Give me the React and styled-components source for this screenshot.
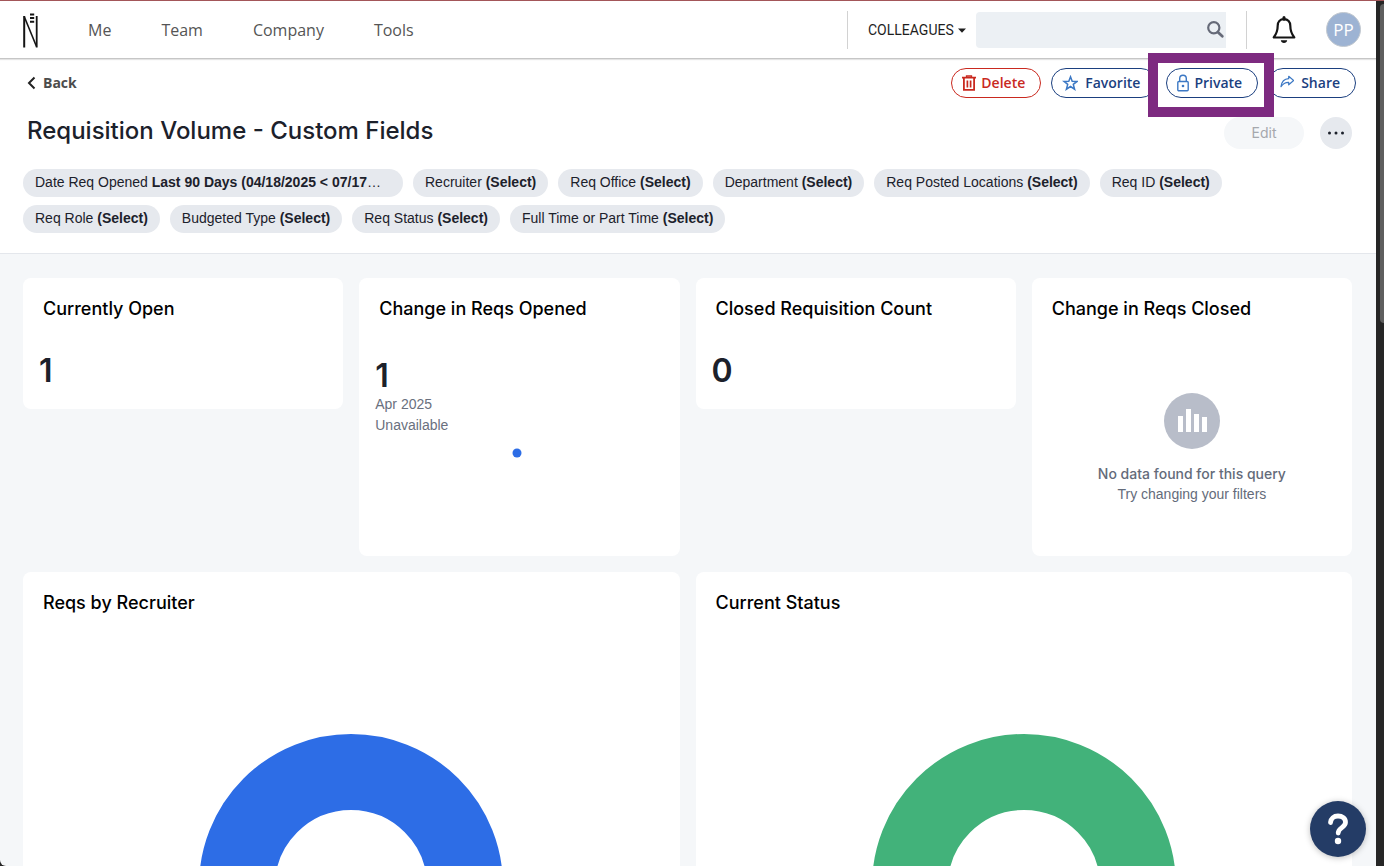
import React from "react";
import styled, { createGlobalStyle, css } from "styled-components";

const ui = `Inter, "Liberation Sans", sans-serif`;
const compact = `"Liberation Sans", Arial, sans-serif`;
const shell = `"Open Sans", "Noto Sans", sans-serif`;

const GlobalStyle = createGlobalStyle`
  *, *::before, *::after { box-sizing: border-box; }
  body { margin: 0; background: #262626; font-family: ${ui}; color: #1c212b; }
  button, input, select { font: inherit; color: inherit; }
  h1, h2, p { margin: 0; }
`;

const Window = styled.div`
  display: flex;
  height: 100vh;
  overflow: hidden;
  border-top: 1px solid #a35659;
`;

const Page = styled.div`
  flex: 1;
  min-width: 0;
  overflow: hidden;
  background: #f5f7f9;
  border-bottom-left-radius: 6px;
`;

const ScrollTrack = styled.div`
  width: 8px;
  padding: 3px 0 0 4px;
  background: #262626;
`;

const ScrollThumb = styled.div`
  height: 37%;
  background: #5f5f5f;
  border-radius: 4px 0 0 4px;
`;

const Header = styled.header`
  display: flex;
  align-items: center;
  height: 58px;
  padding: 0 15px 0 23px;
  background: #fff;
  border-bottom: 1px solid #c6c6c6;
  box-shadow: 0 1px 1px #e4e4e4;
  position: relative;
`;

const Nav = styled.nav`
  display: flex;
  gap: 50px;
  margin-left: 50px;
`;

const NavLink = styled.a`
  font: 400 16px/24px ${shell};
  color: #555;
  text-decoration: none;
`;

const HeaderTools = styled.div`
  display: flex;
  align-items: center;
  margin-left: auto;
`;

const Divider = styled.span`
  width: 1px;
  height: 38px;
  background: #d2d2d2;
`;

const ScopeField = styled.label`
  position: relative;
  display: flex;
  margin: 0 10px 0 20px;
  svg {
    position: absolute;
    right: 0;
    top: 10px;
    pointer-events: none;
  }
`;

const ScopeSelect = styled.select`
  appearance: none;
  width: 98px;
  height: 24px;
  padding: 0;
  border: 0;
  background: none;
  font: 400 14px/24px Roboto, sans-serif;
  color: #1e1e1e;
`;

const Search = styled.form`
  display: flex;
  width: 250px;
  height: 36px;
  margin-right: 20px;
  background: #ecf0f4;
  border-radius: 4px 0 0 4px;
`;

const SearchInput = styled.input`
  flex: 1;
  min-width: 0;
  padding: 0 12px;
  border: 0;
  background: none;
  font: 400 14px/20px ${shell};
`;

const IconButton = styled.button`
  display: flex;
  align-items: center;
  justify-content: center;
  padding: 0;
  border: 0;
  background: none;
`;

const Bell = styled(IconButton)`
  margin: 0 30px 0 25px;
`;

const Avatar = styled(IconButton)`
  width: 35px;
  height: 35px;
  border: 1px solid #c3c9d0;
  border-radius: 50%;
  background: #9db3d3;
  color: #fff;
  font: 400 17px/24px ${shell};
`;

const Top = styled.section`
  padding: 9px 20px 20px 23px;
  background: #fff;
  border-bottom: 1px solid #e4e7ec;
`;

const ActionRow = styled.div`
  display: flex;
  align-items: center;
  justify-content: space-between;
`;

const Back = styled.a`
  display: flex;
  align-items: center;
  gap: 7px;
  padding-left: 4px;
  font: 700 14px/20px ${shell};
  color: #4c4c4c;
  text-decoration: none;
`;

const Actions = styled.div`
  display: flex;
  gap: 10px;
`;

const Pill = styled.button`
  display: flex;
  align-items: center;
  gap: ${(p) => p.$gap || 5}px;
  height: 30px;
  padding: 0 15px 0 10px;
  border: 1px solid currentColor;
  border-radius: 15px;
  background: #fff;
  color: ${(p) => (p.$danger ? "#c9291f" : "#1b3f7f")};
  font: 600 14px/20px ${shell};
`;

const Marked = styled.div`
  position: relative;
  &::after {
    content: "";
    position: absolute;
    inset: -15px -16px -19px -18px;
    border: 10px solid #7d2a80;
    pointer-events: none;
    z-index: 2;
  }
`;

const TitleRow = styled.div`
  display: flex;
  align-items: center;
  gap: 16px;
  margin-top: 19px;
  padding: 0 4px;
`;

const Title = styled.h1`
  flex: 1;
  font-size: 24px;
  line-height: 28px;
  font-weight: 500;
  padding-bottom: 4px;
`;

const EditButton = styled.button`
  width: 80px;
  height: 32px;
  padding: 0 0 2px;
  border: 0;
  border-radius: 16px;
  background: #f5f7f9;
  color: #a5a8ad;
  font-size: 14px;
`;

const MoreButton = styled(IconButton)`
  width: 32px;
  height: 32px;
  border-radius: 50%;
  background: #e6e9ee;
`;

const Filters = styled.div`
  display: flex;
  flex-wrap: wrap;
  gap: 8px 10px;
  margin-top: 20px;
`;

const Chip = styled.button`
  height: 28px;
  padding: 0 12px 2px;
  border: 0;
  border-radius: 14px;
  background: #e6e9ee;
  font: 400 14px/20px ${compact};
  text-align: left;
  white-space: nowrap;
  b { font-weight: 700; }
  ${(p) => p.$wide && css`min-width: 380px;`}
`;

const Board = styled.main`
  display: grid;
  grid-template-columns: repeat(4, 1fr);
  align-items: start;
  gap: 16px;
  padding: 24px 24px 24px 23px;
`;

const Card = styled.article`
  grid-column: span ${(p) => p.$span || 1};
  min-height: ${(p) => p.$height || 131}px;
  padding: 19px 16px 16px;
  background: #fff;
  border-radius: 8px;
`;

const CardTitle = styled.h2`
  padding: 0 4px;
  font-size: 18px;
  line-height: 24px;
  font-weight: 500;
  color: #000;
`;

const Figure = styled.p`
  margin-top: ${(p) => p.$top || 32}px;
  font-size: 32px;
  line-height: 36px;
  font-weight: 600;
`;

const Note = styled.p`
  font: 400 14px/21px ${compact};
  color: #6a707e;
`;

const Trend = styled.svg`
  display: block;
  margin-top: 11px;
`;

const Empty = styled.div`
  display: flex;
  flex-direction: column;
  align-items: center;
  margin-top: 72px;
  font: 400 14px/20px ${compact};
  color: #646b7a;
  strong {
    margin-top: 15px;
    font-family: ${ui};
    font-weight: 500;
  }
`;

const Donut = styled.svg`
  display: block;
  margin: 119px auto 60px;
`;

const Help = styled.button`
  position: fixed;
  right: 18px;
  bottom: 9px;
  width: 56px;
  height: 56px;
  padding: 0;
  border: 0;
  border-radius: 50%;
  background: #243c66;
  box-shadow: 0 1px 6px rgba(0, 0, 0, 0.25);
  display: flex;
  align-items: center;
  justify-content: center;
`;

const navItems = ["Me", "Team", "Company", "Tools"];

const filters = [
  ["Date Req Opened", "Last 90 Days (04/18/2025 < 07/17", "…"],
  ["Recruiter", "(Select)"],
  ["Req Office", "(Select)"],
  ["Department", "(Select)"],
  ["Req Posted Locations", "(Select)"],
  ["Req ID", "(Select)"],
  ["Req Role", "(Select)"],
  ["Budgeted Type", "(Select)"],
  ["Req Status", "(Select)"],
  ["Full Time or Part Time", "(Select)"],
];

const Logo = () => (
  <svg width="15" height="38" viewBox="0 -2 15 38" role="img" aria-label="Home">
    <g fill="none" stroke="#141414">
      <path d="M1.2 3v31.500" strokeWidth="2" />
      <path d="M13.700 3v31.500" strokeWidth="1.800" />
      <path d="M1.200 3.500L13.500 33.500" strokeWidth="1.600" />
      <path d="M7 1.500h4.200M7 5h4.200M7 8.800h4.200" strokeWidth="1.900" />
    </g>
  </svg>
);

const TrashIcon = () => (
  <svg width="14" height="16" viewBox="0 0 14 16" fill="none" stroke="#c9291f">
    <path d="M0 2.700h14" strokeWidth="1.700" />
    <path d="M4.500 2.500V1h5v1.500" strokeWidth="1.300" />
    <path d="M1.900 3v11.800h10.200V3" strokeWidth="1.800" />
    <path d="M5.400 5.500v7M8.600 5.500v7" strokeWidth="1.700" />
  </svg>
);

const StarIcon = () => (
  <svg width="16" height="16" viewBox="0 0 16 16" fill="none" stroke="#3c78c4" strokeWidth="1.500">
    <path d="M8.500 1.800l1.700 4.400 4.900.2-3.800 3 1.300 4.800-4.100-2.700-4.100 2.700 1.300-4.800-3.800-3 4.900-.2z" />
  </svg>
);

const LockIcon = () => (
  <svg width="12" height="18" viewBox="0 0 12 18" fill="none" stroke="#3c78c4" strokeWidth="1.400">
    <rect x=".8" y="7.500" width="10.400" height="9.200" rx="1" />
    <path d="M2.700 7.500V4.500a3.300 3.300 0 0 1 6.600 0v3" />
    <circle cx="6" cy="12" r="1.300" fill="#3c78c4" stroke="none" />
  </svg>
);

const ShareIcon = () => (
  <svg width="15" height="16" viewBox="-1 0 15 16" fill="none" stroke="#3c78c4" strokeWidth="1.200" strokeLinejoin="round">
    <path d="M8.700 1.300l5 4.200-5 4.300V7.300C5.200 7.200 3 8.500 1 11.700 1.600 7 4.200 4 8.700 3.700z" />
  </svg>
);

const BellIcon = () => (
  <svg width="24" height="28" viewBox="0 0 24 28">
    <path d="M12 3.200c-4 0-6.300 2.800-6.300 6.600 0 5.800-1.500 8.500-4 11.700h20.600c-2.500-3.200-4-5.900-4-11.700 0-3.800-2.300-6.600-6.300-6.600z" fill="none" stroke="#151515" strokeWidth="2.200" strokeLinejoin="round" />
    <path d="M12 1.500v1.800" stroke="#151515" strokeWidth="3" strokeLinecap="round" />
    <path d="M8.800 24.300h6.400c-.3 1.800-1.500 2.800-3.200 2.800s-2.900-1-3.200-2.800z" fill="#151515" />
  </svg>
);

function Ring({ color, label }) {
  return (
    <Donut width="304" height="304" viewBox="0 0 304 304" role="img" aria-label={label}>
      <circle cx="152" cy="152" r="114" fill="none" stroke={color} strokeWidth="76" />
    </Donut>
  );
}

export default function App() {
  return (
    <Window>
      <GlobalStyle />
      <Page>
        <Header>
          <Logo />
          <Nav>
            {navItems.map((item) => (
              <NavLink key={item} href="#">{item}</NavLink>
            ))}
          </Nav>
          <HeaderTools>
            <Divider />
            <ScopeField>
              <ScopeSelect aria-label="Search scope" defaultValue="c">
                <option value="c">COLLEAGUES</option>
              </ScopeSelect>
              <svg width="8" height="5" viewBox="0 0 8 5"><path d="M0 .5h8L4 4.800z" fill="#1e1e1e" /></svg>
            </ScopeField>
            <Search role="search">
              <SearchInput type="search" aria-label="Search colleagues" />
              <IconButton type="button" aria-label="Search">
                <svg width="21" height="18" viewBox="0 0 21 18" fill="none" stroke="#666a78">
                  <circle cx="8.800" cy="6.800" r="5.600" strokeWidth="2.200" />
                  <path d="M13 11.200l4.300 4" strokeWidth="2.800" strokeLinecap="round" />
                </svg>
              </IconButton>
            </Search>
            <Divider />
            <Bell type="button" aria-label="Notifications"><BellIcon /></Bell>
            <Avatar type="button">PP</Avatar>
          </HeaderTools>
        </Header>

        <Top>
          <ActionRow>
            <Back href="#">
              <svg width="9" height="14" viewBox="0 0 9 14" fill="none" stroke="#222" strokeWidth="2"><path d="M7.500 1.500L2 7l5.500 5.500" /></svg>
              Back
            </Back>
            <Actions>
              <Pill type="button" $danger><TrashIcon />Delete</Pill>
              <Pill type="button" $gap={7}><StarIcon />Favorite</Pill>
              <Marked>
                <Pill type="button"><LockIcon />Private</Pill>
              </Marked>
              <Pill type="button" $gap={7}><ShareIcon />Share</Pill>
            </Actions>
          </ActionRow>
          <TitleRow>
            <Title>Requisition Volume - Custom Fields</Title>
            <EditButton type="button" disabled>Edit</EditButton>
            <MoreButton type="button" aria-label="More options">
              <svg width="18" height="4" viewBox="0 0 18 4" fill="#1c212b">
                <circle cx="2.500" cy="2" r="1.500" /><circle cx="9" cy="2" r="1.500" /><circle cx="15.500" cy="2" r="1.500" />
              </svg>
            </MoreButton>
          </TitleRow>
          <Filters>
            {filters.map(([name, value, more]) => (
              <Chip key={name} type="button" $wide={Boolean(more)}>
                {name} <b>{value}</b>{more}
              </Chip>
            ))}
          </Filters>
        </Top>

        <Board>
          <Card>
            <CardTitle>Currently Open</CardTitle>
            <Figure>1</Figure>
          </Card>
          <Card $height={278}>
            <CardTitle>Change in Reqs Opened</CardTitle>
            <Figure $top={37}>1</Figure>
            <Note>Apr 2025</Note>
            <Note>Unavailable</Note>
            <Trend width="284" height="12" viewBox="0 0 284 12">
              <circle cx="142" cy="6" r="4.500" fill="#2d6de6" />
            </Trend>
          </Card>
          <Card>
            <CardTitle>Closed Requisition Count</CardTitle>
            <Figure>0</Figure>
          </Card>
          <Card $height={278}>
            <CardTitle>Change in Reqs Closed</CardTitle>
            <Empty>
              <svg width="56" height="56" viewBox="0 0 56 56">
                <circle cx="28" cy="28" r="28" fill="#b8bdc9" />
                <path d="M14 23h5v16h-5zM22 16h5v23h-5zM30 21h5v18h-5zM38 24h5v15h-5z" fill="#fff" />
              </svg>
              <strong>No data found for this query</strong>
              <span>Try changing your filters</span>
            </Empty>
          </Card>
          <Card $span={2}>
            <CardTitle>Reqs by Recruiter</CardTitle>
            <Ring color="#2d6de6" label="Reqs by recruiter" />
          </Card>
          <Card $span={2}>
            <CardTitle>Current Status</CardTitle>
            <Ring color="#42b27a" label="Current status" />
          </Card>
        </Board>
      </Page>
      <ScrollTrack><ScrollThumb /></ScrollTrack>
      <Help type="button" aria-label="Help">
        <svg width="24" height="32" viewBox="0 0 24 32">
          <path d="M4.500 9.500c.3-4 3.300-6.500 7.500-6.500s7.500 2.500 7.500 6.300c0 5.300-7.300 5.300-7.300 10.700" fill="none" stroke="#fff" strokeWidth="4.800" strokeLinecap="round" />
          <circle cx="12" cy="28" r="3.200" fill="#fff" />
        </svg>
      </Help>
    </Window>
  );
}
